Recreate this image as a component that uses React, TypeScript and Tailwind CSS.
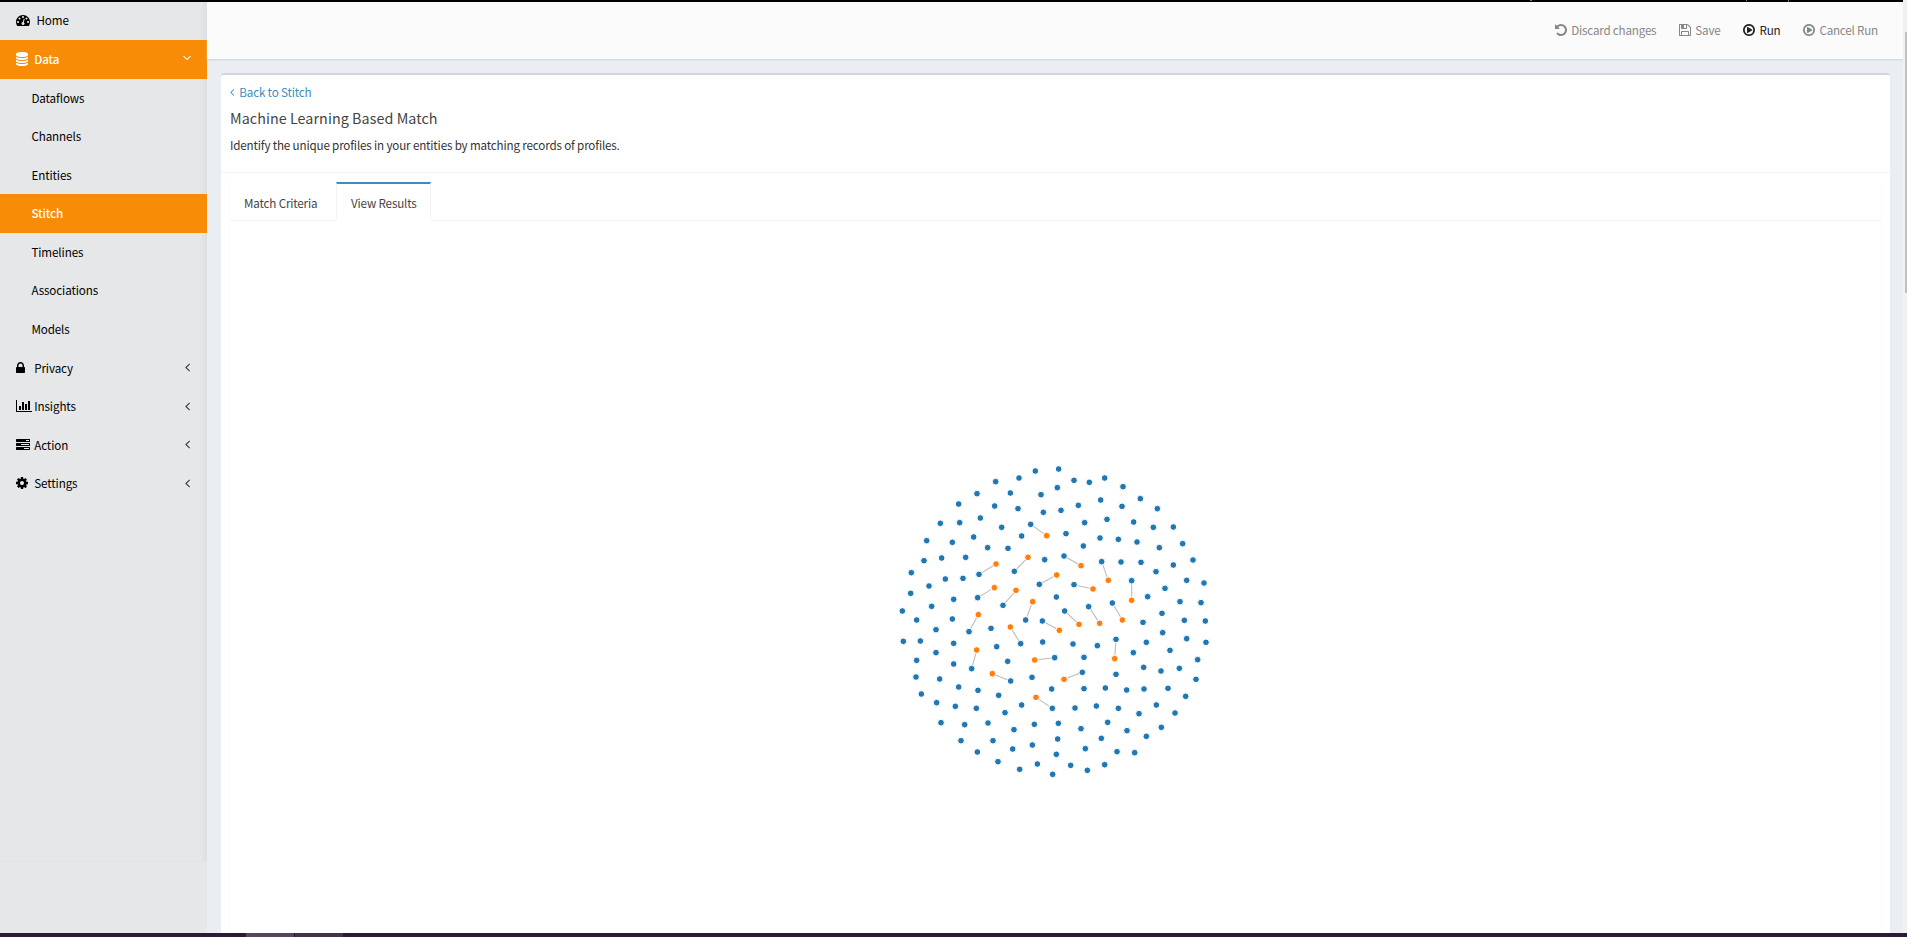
import React from "react";

const ICONS = {
  tachometer:
    "M384 1152q0-53-37.5-90.5t-90.5-37.5-90.5 37.5-37.5 90.5 37.5 90.5 90.5 37.5 90.5-37.5 37.5-90.5zm192-448q0-53-37.5-90.5t-90.5-37.5-90.5 37.5-37.5 90.5 37.5 90.5 90.5 37.5 90.5-37.5 37.5-90.5zm428 481l101-382q6-26-7.5-48.5t-38.5-29.5-48 6.5-30 39.5l-101 382q-60 5-107 43.5t-63 98.500q-20 77 20 146t117 89 146-20 89-117q16-60-6-117t-72-91zm660-33q0-53-37.5-90.5t-90.5-37.5-90.5 37.5-37.5 90.5 37.5 90.5 90.5 37.5 90.5-37.5 37.5-90.5zm-640-640q0-53-37.5-90.5t-90.5-37.5-90.5 37.5-37.5 90.5 37.5 90.5 90.5 37.5 90.5-37.5 37.5-90.5zm448 192q0-53-37.5-90.5t-90.5-37.5-90.5 37.5-37.5 90.5 37.5 90.5 90.5 37.5 90.5-37.5 37.5-90.5zm320 448q0 261-141 483-19 29-54 29h-1402q-35 0-54-29-141-221-141-483 0-182 71-348t191-286 286-191 348-71 348 71 286 191 191 286 71 348z",
  database:
    "M768 768q237 0 443-43t325-127v170q0 69-103 128t-280 93.5-385 34.5-385-34.5-280-93.5-103-128v-170q119 84 325 127t443 43zm0 768q237 0 443-43t325-127v170q0 69-103 128t-280 93.5-385 34.5-385-34.5-280-93.5-103-128v-170q119 84 325 127t443 43zm0-384q237 0 443-43t325-127v170q0 69-103 128t-280 93.5-385 34.5-385-34.5-280-93.5-103-128v-170q119 84 325 127t443 43zm0-1152q208 0 385 34.5t280 93.5 103 128v128q0 69-103 128t-280 93.5-385 34.5-385-34.5-280-93.5-103-128v-128q0-69 103-128t280-93.5 385-34.5z",
  lock: "M320 768h512v-192q0-106-75-181t-181-75-181 75-75 181v192zm832 96v576q0 40-28 68t-68 28h-960q-40 0-68-28t-28-68v-576q0-40 28-68t68-28h32v-192q0-184 132-316t316-132 316 132 132 316v192h32q40 0 68 28t28 68z",
  chart:
    "M640 896v512h-256v-512h256zm384-512v1024h-256v-1024h256zm1024 1152v128h-2048v-1536h128v1408h1920zm-640-896v768h-256v-768h256zm384-384v1152h-256v-1152h256z",
  tasks:
    "M1024 1408h640v-128h-640v128zm-384-512h1024v-128h-1024v128zm640-512h384v-128h-384v128zm512 832v256q0 26-19 45t-45 19h-1664q-26 0-45-19t-19-45v-256q0-26 19-45t45-19h1664q26 0 45 19t19 45zm0-512v256q0 26-19 45t-45 19h-1664q-26 0-45-19t-19-45v-256q0-26 19-45t45-19h1664q26 0 45 19t19 45zm0-512v256q0 26-19 45t-45 19h-1664q-26 0-45-19t-19-45v-256q0-26 19-45t45-19h1664q26 0 45 19t19 45z",
  cog: "M1024 896q0-106-75-181t-181-75-181 75-75 181 75 181 181 75 181-75 75-181zm512-109v222q0 12-8 23t-20 13l-185 28q-19 54-39 91 35 50 107 138 10 12 10 25t-9 23q-27 37-99 108t-94 71q-12 0-26-9l-138-108q-44 23-91 38-16 136-29 186-7 28-36 28h-222q-14 0-24.5-8.5t-11.5-21.5l-28-184q-49-16-90-37l-141 107q-10 9-25 9-14 0-25-11-126-114-165-168-7-10-7-23 0-12 8-23 15-21 51-66.5t54-70.5q-27-50-41-99l-183-27q-13-2-21-12.5t-8-23.5v-222q0-12 8-23t19-13l186-28q14-46 39-92-40-57-107-138-10-12-10-24 0-10 9-23 26-36 98.5-107.5t94.5-71.5q13 0 26 10l138 107q44-23 91-38 16-136 29-186 7-28 36-28h222q14 0 24.5 8.500t11.5 21.5l28 184q49 16 90 37l142-107q9-9 24-9 13 0 25 10 129 119 165 170 7 8 7 22 0 12-8 23-15 21-51 66.5t-54 70.5q26 50 41 98l183 28q13 2 21 12.5t8 23.5z",
  undo: "M1536 896q0 156-61 298t-164 245-245 164-298 61q-172 0-327-72.5t-264-204.5q-7-10-6.500-22.5t8.500-20.5l137-138q10-9 25-9 16 2 23 12 73 95 179 147t225 52q104 0 198.5-40.5t163.5-109.5 109.5-163.5 40.5-198.5-40.5-198.5-109.5-163.5-163.5-109.5-198.5-40.5q-98 0-188 35.5t-160 101.5l137 138q31 30 14 69-17 40-59 40h-448q-26 0-45-19t-19-45v-448q0-42 40-59 39-17 69 14l130 129q107-101 244.5-156.5t284.5-55.5q156 0 298 61t245 164 164 245 61 298z",
  save: "M384 1536h768v-384h-768v384zm896 0h128v-896q0-14-10-38.5t-20-34.5l-281-281q-10-10-34-20t-39-10v416q0 40-28 68t-68 28h-576q-40 0-68-28t-28-68v-416h-128v1280h128v-416q0-40 28-68t68-28h832q40 0 68 28t28 68v416zm-384-928v-320q0-13-9.5-22.5t-22.5-9.5h-192q-13 0-22.5 9.500t-9.5 22.5v320q0 13 9.500 22.5t22.5 9.500h192q13 0 22.5-9.5t9.500-22.5zm640 32v928q0 40-28 68t-68 28h-1344q-40 0-68-28t-28-68v-1344q0-40 28-68t68-28h928q40 0 88 20t76 48l280 280q28 28 48 76t20 88z",
  play: "M1184 896q0 37-32 55l-544 320q-15 9-32 9-16 0-32-8-32-19-32-56v-640q0-37 32-56 33-18 64 1l544 320q32 18 32 55zm128 0q0-148-73-273t-198-198-273-73-273 73-198 198-73 273 73 273 198 198 273 73 273-73 198-198 73-273zm224 0q0 209-103 385.5t-279.5 279.5-385.5 103-385.5-103-279.5-279.5-103-385.5 103-385.5 279.5-279.5 385.5-103 385.5 103 279.5 279.5 103 385.5z",
  angleLeft:
    "M627 544q0 13-10 23l-393 393 393 393q10 10 10 23t-10 23l-50 50q-10 10-23 10t-23-10l-466-466q-10-10-10-23t10-23l466-466q10-10 23-10t23 10l50 50q10 10 10 23z",
};

type IconName = keyof typeof ICONS;

/* Glyphs share a 1792-unit em; the advance is the width of each glyph. */
const ADVANCE: Record<IconName, number> = {
  tachometer: 1792,
  database: 1536,
  lock: 1152,
  chart: 2048,
  tasks: 1792,
  cog: 1536,
  undo: 1536,
  save: 1536,
  play: 1536,
  angleLeft: 640,
};

function Icon({ name, size = 14, className = "" }: { name: IconName; size?: number; className?: string }) {
  const w = ADVANCE[name];
  return (
    <svg
      viewBox={`0 0 ${w} 1792`}
      width={(w / 1792) * size}
      height={size}
      fill="currentColor"
      className={`shrink-0 ${className}`}
    >
      <path d={ICONS[name]} />
    </svg>
  );
}

const ROW = "flex h-[38.57px] shrink-0 items-center pb-[0.4px]";

function Group({ icon, label }: { icon: IconName; label: string }) {
  return (
    <div className={`${ROW} pl-4 pr-[17.5px] text-black`}>
      <div className="flex w-[18.2px] items-center">
        <Icon name={icon} />
      </div>
      <span className="grow">{label}</span>
      <Icon name="angleLeft" className="mb-px text-[#333]" />
    </div>
  );
}

function Child({ label, active = false }: { label: string; active?: boolean }) {
  return (
    <div className={`${ROW} pl-[31.4px] ${active ? "bg-[#f88c06] font-medium text-white" : "text-black"}`}>{label}</div>
  );
}

function Sidebar() {
  return (
    <aside className="flex w-[207px] shrink-0 flex-col bg-[#e5e7e9] tracking-[-0.1px]">
      <nav className="flex h-[860px] flex-col border-b border-[#e1e3e5] bg-[linear-gradient(to_left,#dcdee0,#e5e7e9_7px)]">
        <div className="flex h-[38px] shrink-0 items-center pb-[2px] pl-4 text-black">
          <Icon name="tachometer" />
          <span className="pl-[6.5px]">Home</span>
        </div>
        <div className={`${ROW} bg-[#f88c06] pl-4 pr-[18px] font-medium text-white`}>
          <div className="flex w-[18.2px] items-center">
            <Icon name="database" />
          </div>
          <span className="grow">Data</span>
          <Icon name="angleLeft" className="mb-[2px] -rotate-90" />
        </div>
        <Child label="Dataflows" />
        <Child label="Channels" />
        <Child label="Entities" />
        <Child label="Stitch" active />
        <Child label="Timelines" />
        <Child label="Associations" />
        <Child label="Models" />
        <Group icon="lock" label="Privacy" />
        <Group icon="chart" label="Insights" />
        <Group icon="tasks" label="Action" />
        <Group icon="cog" label="Settings" />
      </nav>
    </aside>
  );
}

function ToolButton({ icon, label, enabled = false }: { icon: IconName; label: string; enabled?: boolean }) {
  return (
    <button className={`flex items-center gap-[4.5px] ${enabled ? "text-[#222]" : "text-[#868686]"}`}>
      <Icon name={icon} />
      <span className="tracking-[-0.2px]">{label}</span>
    </button>
  );
}

type Point = [number, number];

/* Unlinked profiles. */
const SINGLES: Point[] = [
  [436, 48], [387, 69], [317, 80], [361, 114], [261, 116], [453, 119], [206, 147], [314, 153], [384, 161], [460, 172],
  [271, 189], [209, 203], [151, 205], [335, 217], [395, 243], [251, 246], [110, 257], [187, 262], [293, 278], [354, 280],
  [155, 309], [227, 307], [102, 317], [464, 314], [64, 353], [166, 372], [219, 370], [117, 393], [62, 415], [191, 433],
  [125, 454], [37, 468], [80, 495], [187, 492], [506, 42], [552, 76], [598, 82], [644, 69], [502, 98], [699, 95],
  [632, 135], [751, 131], [513, 166], [565, 151], [696, 154], [802, 161], [584, 203], [651, 193], [731, 201], [790, 217],
  [850, 216], [528, 236], [630, 249], [685, 253], [741, 261], [580, 273], [808, 278], [878, 266], [693, 321], [753, 322],
  [909, 315], [850, 330], [798, 350], [890, 376], [942, 384], [825, 400], [499, 426], [773, 425], [870, 440], [933, 443],
  [816, 475], [883, 496], [946, 498], [759, 502], [138, 524], [303, 520], [40, 559], [91, 558], [191, 565], [138, 593],
  [320, 575], [458, 561], [80, 616], [191, 627], [353, 619], [78, 666], [149, 672], [426, 667], [206, 696], [264, 706],
  [94, 717], [326, 721], [485, 702], [140, 743], [196, 754], [259, 760], [395, 750], [345, 773], [153, 803], [224, 809],
  [294, 804], [433, 808], [372, 824], [213, 857], [309, 857], [427, 870], [368, 882], [262, 891], [324, 920], [442, 927],
  [389, 943], [488, 958], [818, 533], [549, 567], [622, 572], [769, 562], [890, 551], [948, 562], [840, 586], [730, 593],
  [582, 607], [923, 614], [761, 637], [813, 648], [868, 640], [678, 658], [918, 673], [582, 701], [646, 699], [710, 705],
  [762, 702], [834, 700], [887, 724], [555, 759], [619, 753], [685, 760], [799, 750], [747, 776], [855, 774], [505, 805],
  [653, 802], [573, 821], [814, 817], [711, 827], [503, 852], [634, 850], [769, 844], [586, 881], [681, 890], [734, 893],
  [499, 898], [542, 931], [644, 929], [592, 946],
];

/* Matched pairs: primary profile, then the matched record. */
const PAIRS: [Point, Point][] = [
  [[422, 208], [470, 242]], [[373, 349], [414, 307]], [[267, 358], [318, 327]], [[263, 428], [313, 398]],
  [[339, 451], [378, 406]], [[237, 530], [265, 479]], [[407, 495], [428, 440]], [[448, 388], [500, 360]],
  [[522, 303], [573, 332]], [[635, 320], [655, 376]], [[725, 377], [725, 436]], [[552, 389], [609, 402]],
  [[667, 444], [697, 495]], [[596, 455], [629, 505]], [[524, 468], [567, 508]], [[457, 498], [508, 526]],
  [[392, 566], [361, 516]], [[245, 641], [260, 585]], [[494, 608], [434, 615]], [[362, 678], [307, 656]],
  [[487, 760], [438, 727]], [[678, 553], [674, 611]], [[577, 652], [522, 673]],
];

function Dot({ at, fill }: { at: Point; fill: string }) {
  return <circle cx={at[0]} cy={at[1]} r={10} fill={fill} stroke="#fff" strokeWidth={3} />;
}

function MatchGraph() {
  return (
    <svg viewBox="0 0 990 990" width={330} height={330} className="ml-[660px] mt-[234px]">
      {PAIRS.map(([a, b], i) => (
        <line key={i} x1={a[0]} y1={a[1]} x2={b[0]} y2={b[1]} stroke="#bbb" strokeWidth={3.2} />
      ))}
      {SINGLES.map((p, i) => (
        <Dot key={i} at={p} fill="#1f77b4" />
      ))}
      {PAIRS.map(([a, b], i) => (
        <g key={i}>
          <Dot at={a} fill="#1f77b4" />
          <Dot at={b} fill="#ff7f0e" />
        </g>
      ))}
    </svg>
  );
}

function Panel() {
  return (
    <section className="mx-[14px] mr-[13px] mt-[13px] flex grow flex-col rounded-t-[3px] border-t-2 border-[#d2d6de] bg-white tracking-[-0.16px] text-[#444]">
      <header className="flex h-[98px] shrink-0 flex-col border-b border-[#f4f4f4] pl-[9px]">
        <a className="mt-[8px] flex h-[18px] items-center gap-[5px] text-[#3c8dbc]">
          <Icon name="angleLeft" size={12} />
          <span>Back to Stitch</span>
        </a>
        <h1 className="mt-[6px] h-[22px] text-[14.3px] leading-[22px] tracking-[0.07px] text-[#444]">
          Machine Learning Based Match
        </h1>
        <p className="mt-[7px] h-[18px] leading-[18px] text-[#333]">
          Identify the unique profiles in your entities by matching records of profiles.
        </p>
      </header>
      <div className="ml-2 mr-[8px] mt-[9px] flex grow flex-col border-x border-[#fbfbfb]">
        <div className="flex h-[39px] shrink-0">
          <div className="flex w-[106px] items-center border-b border-[#f4f4f4] pl-[14px] pt-1">Match Criteria</div>
          <div className="flex w-[95px] items-center border-x border-t-2 border-x-[#f4f4f4] border-t-[#3c8dbc] pl-[14px] pt-px">
            View Results
          </div>
          <div className="grow border-b border-[#f4f4f4]" />
        </div>
        <MatchGraph />
      </div>
    </section>
  );
}

export default function App() {
  return (
    <div className="flex h-[937px] w-[1907px] overflow-hidden bg-[#f1f1f1] font-['Noto_Sans_CJK_SC','Noto_Sans',sans-serif] text-[11.64px] leading-[18px]">
      <div className="flex w-[1903px] shrink-0 flex-col">
        <div className="flex h-[2px] shrink-0 bg-black pl-[1530px]">
          <div className="h-px w-[2px] bg-[#777]" />
          <div className="ml-[214px] h-px w-px bg-[#777]" />
          <div className="ml-[41px] w-px bg-[#777]" />
        </div>
        <div className="flex h-[931px]">
          <Sidebar />
          <main className="flex grow flex-col bg-[#eaeef3]">
            <div className="flex h-[58px] shrink-0 items-center justify-end gap-[22.5px] border-b border-[#d5dae0] bg-[#fbfbfb] pb-px pr-[25px] shadow-[0_1px_1px_#e2e6eb]">
              <ToolButton icon="undo" label="Discard changes" />
              <ToolButton icon="save" label="Save" />
              <ToolButton icon="play" label="Run" enabled />
              <ToolButton icon="play" label="Cancel Run" />
            </div>
            <Panel />
          </main>
        </div>
        <div className="flex h-1 bg-[#2a1a33] pl-[246px]">
          <div className="mr-px w-12 bg-[#51475a]" />
          <div className="w-12 bg-[#413448]" />
        </div>
      </div>
      <div className="flex w-1 flex-col">
        <div className="mt-8 h-[261px] w-[2px] self-end bg-[#c1c1c1]" />
        <div className="h-[640px]" />
        <div className="h-1 bg-[#2a1a33]" />
      </div>
    </div>
  );
}
